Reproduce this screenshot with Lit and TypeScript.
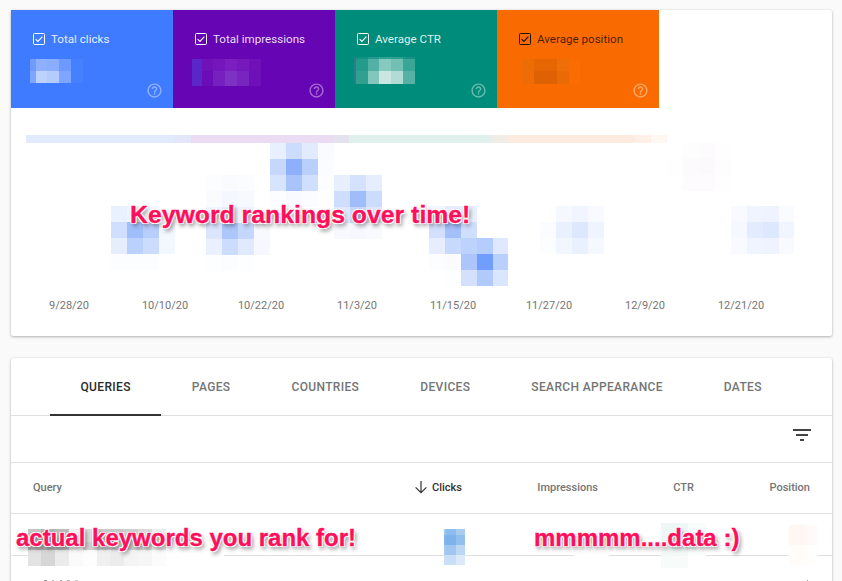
import { LitElement, html, css, svg } from "lit";
import { customElement } from "lit/decorators.js";

interface Patch { x: number; y: number; cols: number[]; rows: number[]; c: string[][]; }

const C = 16;
const sq = (n: number) => Array(n).fill(C);

const patches: Patch[] = [
  // metric tile values
  { x: 30, y: 59, cols: [6, 11, 12, 12, 12], rows: [12, 12], c: [
    ["#6f9bff", "#8fb0ff", "#8aadff", "#6c9aff", "#4580ff"],
    ["#7ea5ff", "#bed2ff", "#b5ccff", "#7ea5ff", "#4580ff"] ] },
  { x: 192, y: 59, cols: [10, 11, 12, 12, 12, 12], rows: [12, 15], c: [
    ["#5a26c8", "#6f12b8", "#7416bc", "#7a1ebf", "#7518bc", "#6f10b8"],
    ["#5a26c8", "#6a0cb7", "#7520bf", "#7f30c5", "#7825c0", "#6d10b8"] ] },
  { x: 354, y: 57, cols: [2, 12, 11, 12, 12, 12], rows: [2, 12, 13], c: [
    ["#1f7f86", "#0f9284", "#1f9a8c", "#2fa293", "#2aa091", "#159486"],
    ["#2b7f8b", "#249b8c", "#52b1a4", "#85c9bf", "#72c0b4", "#3aa695"],
    ["#2b7f8b", "#31a091", "#81c7bc", "#c9e6e2", "#b1dcd5", "#55b2a4"] ] },
  { x: 522, y: 59, cols: [12, 12, 11, 12, 11], rows: [12, 13], c: [
    ["#ed6d05", "#e56603", "#e56603", "#ee6f08", "#f96d03"],
    ["#ee6c06", "#de6103", "#de6103", "#ea6a07", "#f96d03"] ] },
  // chart blocks
  { x: 111, y: 206, cols: sq(4), rows: sq(4), c: [
    ["#e9f0fe", "#eff4ff", "#f5f8ff", "#ffffff"],
    ["#cfdffd", "#a0bffa", "#b8cefc", "#f3f7ff"],
    ["#e6eefe", "#bbd1fd", "#cbdcfd", "#f3f7ff"],
    ["#fcfdff", "#fcfdff", "#fcfdff", "#ffffff"] ] },
  { x: 206, y: 175, cols: sq(4), rows: sq(6), c: [
    ["#fcfdff", "#fafbff", "#fbfcff", "#ffffff"],
    ["#f9fbff", "#f4f7ff", "#f6f9ff", "#ffffff"],
    ["#f0f4ff", "#e6eefe", "#eef3ff", "#fcfdff"],
    ["#dbe6fe", "#adc7fb", "#c5d7fc", "#f7f9ff"],
    ["#eaf0fe", "#cbdcfd", "#e0e9fe", "#f6f8ff"],
    ["#fdfeff", "#fcfdff", "#fdfeff", "#ffffff"] ] },
  { x: 270, y: 143, cols: sq(4), rows: sq(4), c: [
    ["#e8effe", "#ccdcfd", "#e2eafe", "#fafbff"],
    ["#c5d7fc", "#8eb0fa", "#b9cffc", "#fafcff"],
    ["#d7e4fd", "#a9c4fb", "#d0dffd", "#fcfdff"],
    ["#fcfdff", "#f8faff", "#fbfcff", "#ffffff"] ] },
  { x: 334, y: 175, cols: sq(3), rows: sq(4), c: [
    ["#e8effe", "#d5e2fd", "#e6eefe"],
    ["#cfdefd", "#9fbdfb", "#ccdcfd"],
    ["#e0e9fe", "#c5d7fc", "#dfe8fe"],
    ["#f7f9ff", "#f5f8ff", "#f8faff"] ] },
  { x: 429, y: 206, cols: [16, 16, 16, 16, 15], rows: sq(5), c: [
    ["#f2f6ff", "#e6eefe", "#e8effe", "#ffffff", "#ffffff"],
    ["#d2e0fd", "#a3c0fb", "#d0dffd", "#ffffff", "#ffffff"],
    ["#e7edfe", "#c7d9fd", "#bdd2fd", "#b5cdfd", "#dfe8fe"],
    ["#fcfdff", "#fbfcff", "#acc6fc", "#6f9efd", "#bad0fc"],
    ["#ffffff", "#fdfeff", "#d3e1fd", "#b1cafc", "#dae6fe"] ] },
  { x: 540, y: 206, cols: sq(4), rows: sq(3), c: [
    ["#ffffff", "#f6f8ff", "#f1f5ff", "#f9faff"],
    ["#fbfcff", "#e9f0fe", "#dde7fd", "#f0f4ff"],
    ["#fcfdff", "#f2f6ff", "#eaf1fe", "#f6f8ff"] ] },
  { x: 731, y: 206, cols: [16, 16, 16, 15], rows: sq(3), c: [
    ["#f9faff", "#f0f4ff", "#eff3ff", "#fafbff"],
    ["#f6f8ff", "#e3ebfe", "#dde7fd", "#f1f5ff"],
    ["#f9faff", "#f0f4ff", "#eef3ff", "#f9faff"] ] },
  { x: 667, y: 143, cols: sq(4), rows: sq(3), c: [
    ["#ffffff", "#fefdfe", "#fdfbfe", "#fffeff"],
    ["#fffeff", "#fdfafd", "#fcf9fd", "#fefdfe"],
    ["#ffffff", "#fdfbfe", "#fdfbfe", "#fffeff"] ] },
  // table row blocks
  { x: 28, y: 529, cols: [13, 14, 14, 14, 14, 13, 14, 14, 14, 14, 14], rows: [13, 8, 16], c: [
    ["#c4c4c4", "#b4b4b4", "#bcbcbc", "#f0f0f0", "#dcdcdc", "#cccccc", "#c8c8c8", "#d0d0d0", "#dadada", "#ececec", "#ffffff"],
    ["#b8b8b8", "#acacac", "#bababa", "#ececec", "#d0d0d0", "#c4c4c4", "#c6c6c6", "#cecece", "#d6d6d6", "#e8e8e8", "#ffffff"],
    ["#e3e3e3", "#d6d6d6", "#ebebeb", "#fafafa", "#fdfdfd", "#f0f0f0", "#ececec", "#f4f4f4", "#f6f6f6", "#fbfbfb", "#ffffff"] ] },
  { x: 166, y: 553, cols: [58], rows: [4], c: [["#ffffff"]] },
  { x: 444, y: 529, cols: [2, 10, 9], rows: [6, 10, 10, 10], c: [
    ["#a3c8f0", "#8dbcee", "#a9ccf1"],
    ["#85b7ec", "#7db2eb", "#92bfee"],
    ["#a5c9f1", "#a0c6f0", "#bcd7f4"],
    ["#cbdff7", "#c9def7", "#dbe9f9"] ] },
  { x: 574, y: 553, cols: [35], rows: [4], c: [["#ffffff"]] },
  { x: 661, y: 523, cols: [27, 18], rows: [18, 15, 12], c: [
    ["#eef7f5", "#f8fcfb"],
    ["#f2f9f7", "#fcfefd"],
    ["#f7fbfa", "#ffffff"] ] },
  { x: 789, y: 525, cols: [17, 11], rows: [20, 21], c: [
    ["#fff7f3", "#fffaf8"],
    ["#fffcfa", "#fffefd"] ] },
  // first pixels of the next table row, cut by the window edge
  { x: 44, y: 580, cols: [3, 5, 2, 6, 2, 5, 3, 5, 3, 5], rows: [1], c: [
    ["#999999", "#ffffff", "#bbbbbb", "#ffffff", "#aaaaaa", "#ffffff", "#bbbbbb", "#ffffff", "#cccccc", "#ffffff"] ] },
  { x: 807, y: 580, cols: [1], rows: [1], c: [["#e8803a"]] },
];

const band: [number, string][] = [
  [149, "#e2ebfd"], [16, "#e4e6f9"], [143, "#ecdcf3"], [15, "#e3e2ee"],
  [143, "#dff0ed"], [16, "#efede5"], [127, "#feebdf"], [16, "#fef0e6"], [16, "#fff7f2"],
];

const tiles = [
  { cls: "blue", label: "Total clicks" },
  { cls: "purple", label: "Total impressions" },
  { cls: "teal", label: "Average CTR" },
  { cls: "orange", label: "Average position" },
];

const dates = ["9/28/20", "10/10/20", "10/22/20", "11/3/20", "11/15/20", "11/27/20", "12/9/20", "12/21/20"];
const tabs = ["Queries", "Pages", "Countries", "Devices", "Search appearance", "Dates"];

const help = svg`<path d="M11 18h2v-2h-2v2zm1-16C6.48 2 2 6.48 2 12s4.48 10 10 10 10-4.48 10-10S17.52 2 12 2zm0 18c-4.41 0-8-3.59-8-8s3.59-8 8-8 8 3.59 8 8-3.59 8-8 8zm0-14c-2.21 0-4 1.79-4 4h2c0-1.1.9-2 2-2s2 .9 2 2c0 2-3 1.75-3 5h2c0-2.25 3-2.5 3-5 0-2.21-1.79-4-4-4z"/>`;

@customElement("app-root")
export class AppRoot extends LitElement {
  static styles = css`
    :host {
      display: block;
      position: relative;
      width: 842px;
      height: 581px;
      overflow: hidden;
      background: #fafafa;
      font-family: Roboto, "Liberation Sans", sans-serif;
      color: #757575;
    }
    .page { display: flex; flex-direction: column; gap: 22px; padding: 10px 10px 0 11px; }
    .card {
      background: #fff;
      border-radius: 2px;
      box-shadow: 0 1px 3px rgba(0, 0, 0, 0.28), 0 0 2px rgba(0, 0, 0, 0.08);
    }
    .summary { height: 326px; display: flex; flex-direction: column; }
    .tiles { display: flex; }
    .tile {
      width: 162px;
      height: 98px;
      box-sizing: border-box;
      padding: 23px 10px 9px 22px;
      display: flex;
      flex-direction: column;
      justify-content: space-between;
      color: rgba(255, 255, 255, 0.88);
      fill: rgba(255, 255, 255, 0.42);
    }
    .blue { background: #3f7bff; }
    .purple { background: #6505b3; }
    .teal { background: #008c7a; }
    .orange { background: #f96b00; color: rgba(0, 0, 0, 0.72); }
    .tile-head { display: flex; align-items: center; gap: 6px; font-size: 11.6px; line-height: 12px; }
    .check { width: 12px; height: 12px; flex: none; display: block; fill: none; stroke: currentColor; }
    .orange .check { stroke: #1c1206; }
    .blue .check, .purple .check, .teal .check { stroke: #fff; }
    .help { width: 17px; height: 17px; display: block; align-self: flex-end; }
    .band { display: flex; height: 8px; margin: 27px 0 0 15px; }
    .dates { display: flex; margin: 156px 0 0 10px; }
    .date { width: 96px; text-align: center; font-size: 11px; line-height: 13px; }

    .table { height: 240px; }
    .tabs { display: flex; height: 57px; padding-left: 39px; border-bottom: 1px solid #e0e0e0; }
    .tab {
      padding: 1px 30.5px 0;
      height: 57px;
      box-sizing: border-box;
      display: flex;
      align-items: center;
      font-size: 12px;
      font-weight: 500;
      text-transform: uppercase;
      letter-spacing: 0.35px;
    }
    .tab.active { color: #2b2b2b; border-bottom: 1px solid #333; box-shadow: 0 1px 0 #333; }
    .tools { height: 47px; box-sizing: border-box; padding: 7px 18px 0 0; display: flex; justify-content: flex-end; border-bottom: 1px solid #e0e0e0; }
    .filter { width: 24px; height: 24px; display: block; fill: #444; }
    .head {
      display: grid;
      grid-template-columns: 1fr auto 136px 96px 116px;
      align-items: center;
      height: 51px;
      padding: 0 22px 2px;
      box-sizing: border-box;
      border-bottom: 1px solid #e0e0e0;
      font-size: 11px;
      font-weight: 500;
    }
    .num { text-align: right; }
    .sorted { color: #333; display: flex; align-items: center; gap: 2.4px; }
    .arrow { width: 18px; height: 18px; fill: none; stroke: #333; stroke-width: 1.6; display: block; }
    .row { height: 42px; box-sizing: border-box; border-bottom: 1px solid #e0e0e0; }

    .patch { position: absolute; display: grid; }
    .note {
      position: absolute;
      margin: 0;
      white-space: nowrap;
      font-family: "Liberation Sans", Arial, sans-serif;
      font-weight: 700;
      font-size: 24px;
      line-height: 28px;
      color: #ff0f5b;
      -webkit-text-stroke: 0.35px #ff0f5b;
      text-shadow:
        1px 0 0 #fff, -1px 0 0 #fff, 0 1px 0 #fff, 0 -1px 0 #fff,
        1px 1px 0 #fff, -1px 1px 0 #fff, 1px -1px 0 #fff, -1px -1px 0 #fff,
        2px 3px 4px rgba(0, 0, 0, 0.5);
    }
    .n1 { left: 130px; top: 201px; font-size: 24.8px; }
    .n2 { left: 16px; top: 524px; }
    .n3 { left: 534px; top: 524px; }
  `;

  private patch(p: Patch) {
    const style = `left:${p.x}px;top:${p.y}px;grid-template-columns:${p.cols.map((v) => v + "px").join(" ")};grid-template-rows:${p.rows.map((v) => v + "px").join(" ")}`;
    return html`<div class="patch" style=${style}>
      ${p.c.flat().map((col) => html`<div style="background:${col}"></div>`)}
    </div>`;
  }

  render() {
    return html`
      <div class="page">
        <section class="card summary">
          <div class="tiles">
            ${tiles.map((t) => html`
              <div class="tile ${t.cls}">
                <div class="tile-head">
                  <svg class="check" viewBox="0 0 12 12"><rect x=".5" y=".5" width="11" height="11" rx="1"/><path d="M2.6 6.2 4.9 8.4 9.4 3.6" stroke-width="1.1"/></svg>
                  <span>${t.label}</span>
                </div>
                <svg class="help" viewBox="0 0 24 24">${help}</svg>
              </div>`)}
          </div>
          <div class="band">
            ${band.map(([w, col]) => html`<div style="width:${w}px;background:${col}"></div>`)}
          </div>
          <div class="dates">
            ${dates.map((d) => html`<div class="date">${d}</div>`)}
          </div>
        </section>
        <section class="card table">
          <div class="tabs">
            ${tabs.map((t, i) => html`<div class="tab ${i === 0 ? "active" : ""}">${t}</div>`)}
          </div>
          <div class="tools">
            <svg class="filter" viewBox="0 0 24 24"><path d="M10 18h4v-2h-4v2zM3 6v2h18V6H3zm3 7h12v-2H6v2z"/></svg>
          </div>
          <div class="head">
            <div>Query</div>
            <div class="sorted">
              <svg class="arrow" viewBox="0 0 24 24"><path d="M12 4v15.5M4.8 12.5l7.2 7.2 7.2-7.2"/></svg>
              <span>Clicks</span>
            </div>
            <div class="num">Impressions</div>
            <div class="num">CTR</div>
            <div class="num">Position</div>
          </div>
          <div class="row"></div>
        </section>
      </div>
      ${patches.map((p) => this.patch(p))}
      <p class="note n1">Keyword rankings over time!</p>
      <p class="note n2">actual keywords you rank for!</p>
      <p class="note n3">mmmmm....data :)</p>
    `;
  }
}
